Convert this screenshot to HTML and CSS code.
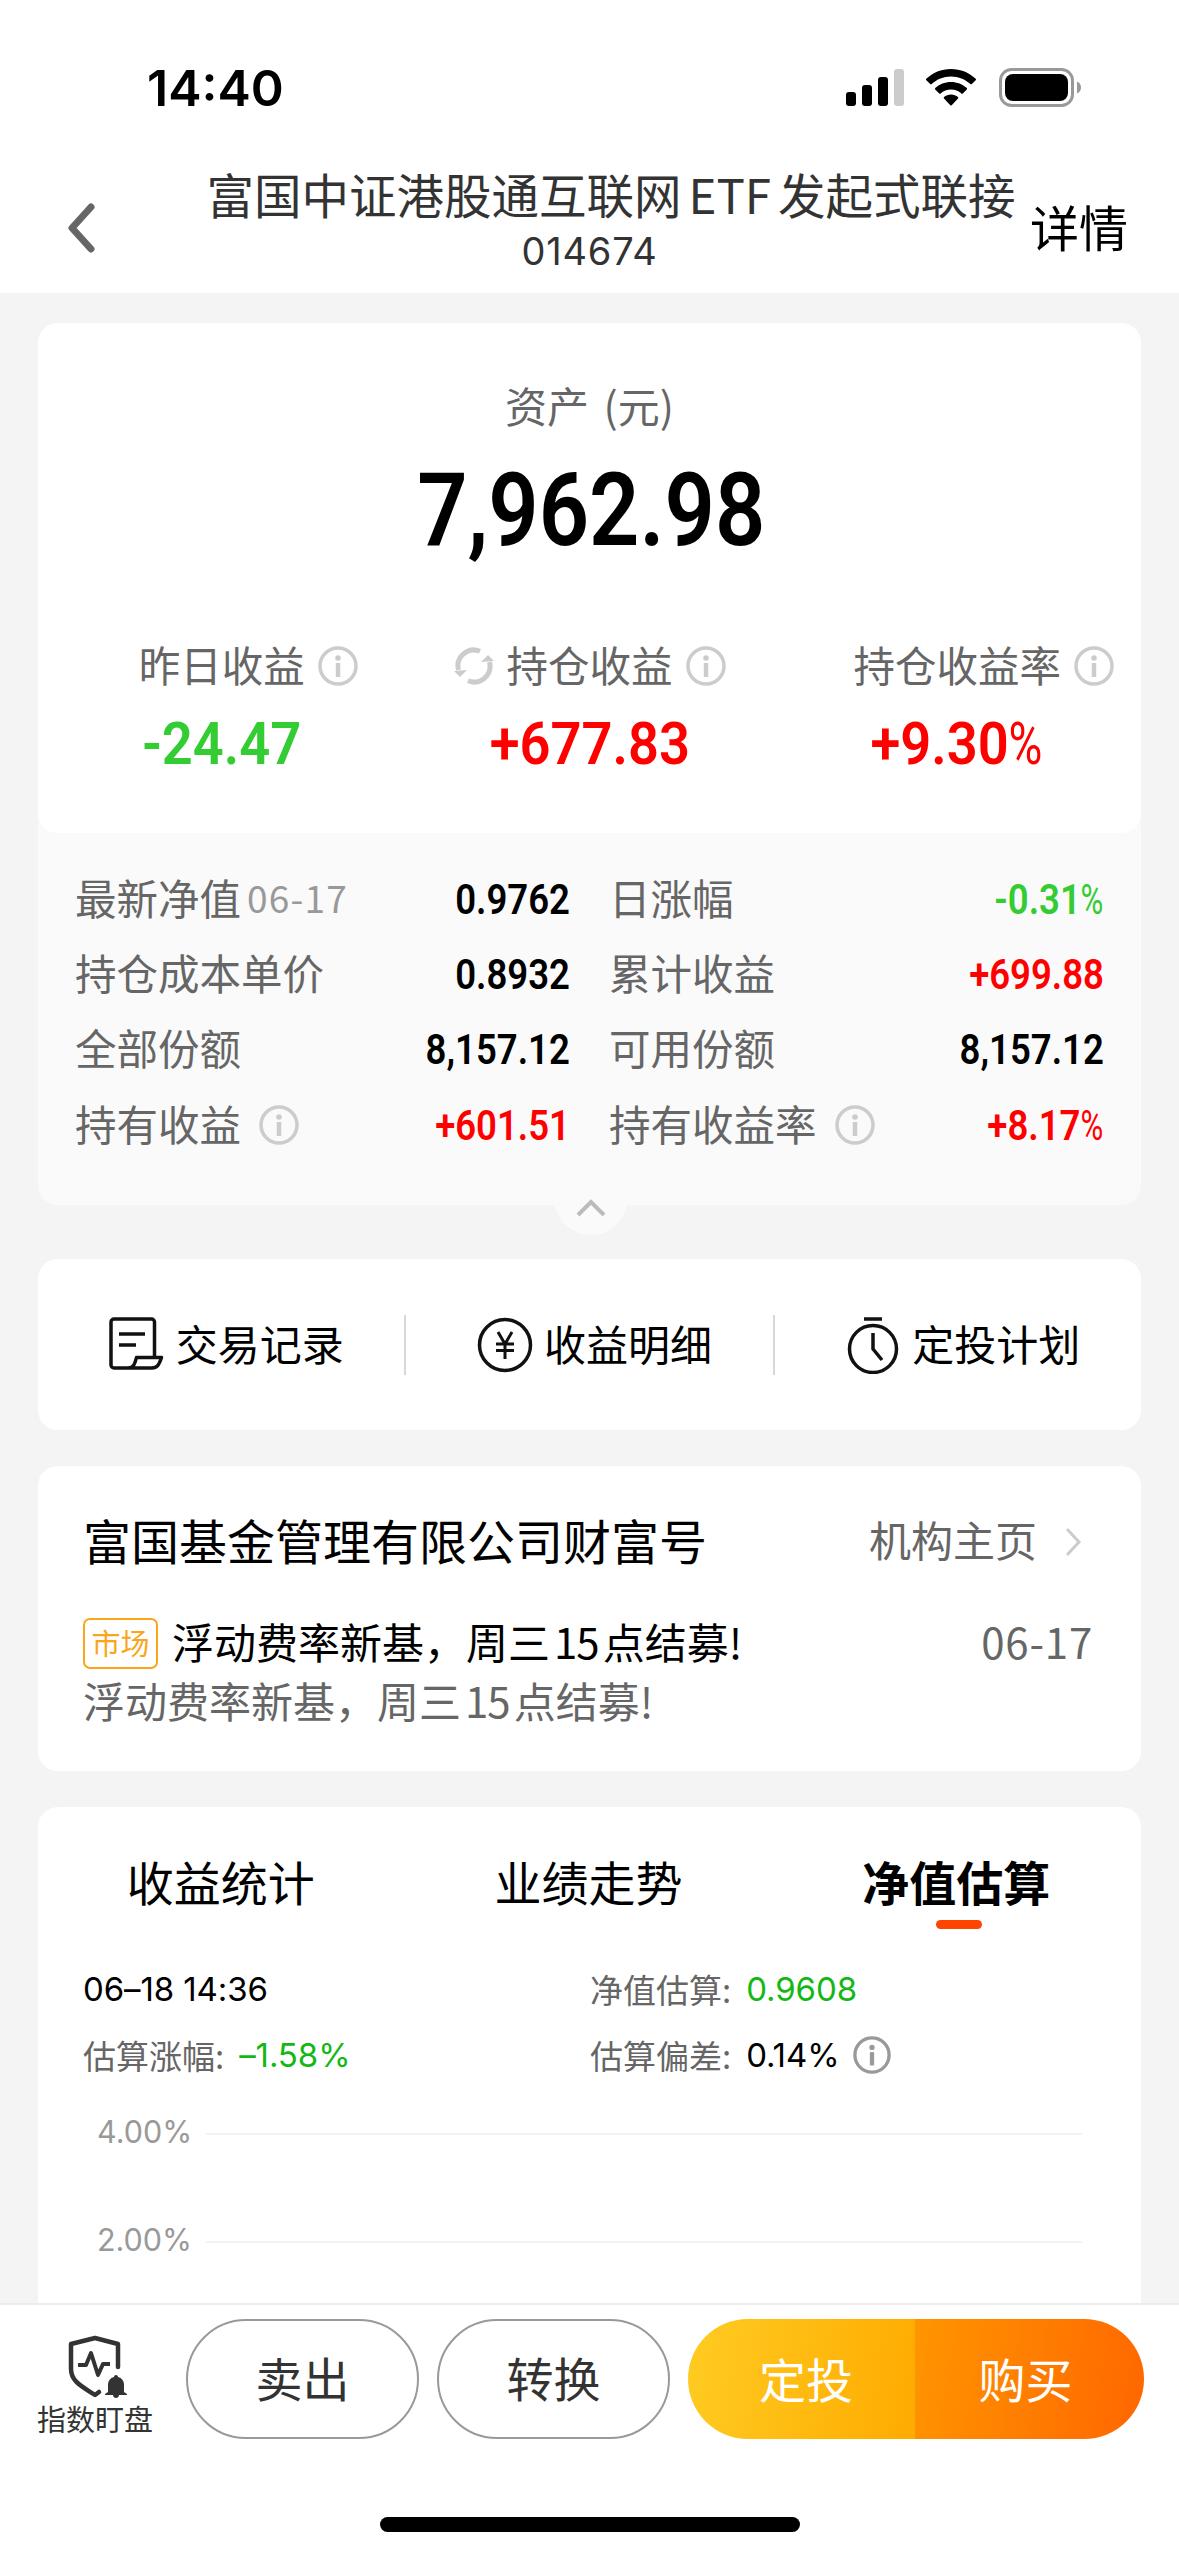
FILE: index.html
```html
<!DOCTYPE html>
<html lang="zh-CN">
<head>
    <meta charset="UTF-8">
    <meta name="viewport" content="width=device-width, initial-scale=1.0">
    <title>基金详情</title>
    <link rel="stylesheet" href="styles.css">
</head>
<body>
    <!-- shared icon -->
    <svg class="sprite">
        <symbol id="info" viewBox="0 0 40 40">
            <circle cx="20" cy="20" r="18" fill="none" stroke="currentColor" stroke-width="3.5"/>
            <circle cx="20" cy="12" r="2.8" fill="currentColor"/>
            <path d="M20 17v14" stroke="currentColor" stroke-width="4.5"/>
        </symbol>
    </svg>

    <div class="status-bar">
        <div class="time">14:40</div>
        <svg class="signal" viewBox="0 0 58 37">
            <rect x="0" y="23" width="10" height="14" rx="3"/>
            <rect x="16" y="16" width="10" height="21" rx="3"/>
            <rect x="32" y="8" width="10" height="29" rx="3"/>
            <rect x="48" y="0" width="10" height="37" rx="3" fill="#ccc"/>
        </svg>
        <svg class="wifi" viewBox="0 0 50 37">
            <path d="M25 0C15.400 0 6.600 3.700 0.300 9.800c-.4.4-.4 1 0 1.400l3.900 3.900c.4.4 1 .4 1.400 0C10.700 10.300 17.500 7.500 25 7.500s14.300 2.800 19.400 7.600c.4.400 1 .4 1.400 0l3.900-3.900c.4-.4.4-1 0-1.400C43.400 3.700 34.600 0 25 0z"/>
            <path d="M25 13c-6.100 0-11.600 2.300-15.800 6.100-.4.4-.4 1 0 1.400l4 4c.4.4 1 .4 1.400 0 2.800-2.500 6.400-4 10.400-4s7.600 1.500 10.400 4c.4.4 1 .4 1.400 0l4-4c.4-.4.4-1 0-1.400C36.600 15.300 31.100 13 25 13z"/>
            <path d="M25 25.500c-2.700 0-5.100 1-7 2.600-.4.4-.4 1 0 1.400l6.300 6.800c.4.4 1 .4 1.400 0l6.300-6.800c.4-.4.4-1 0-1.400-1.900-1.600-4.300-2.600-7-2.600z"/>
        </svg>
        <svg class="battery" viewBox="0 0 82 39">
            <rect x="1.500" y="1.500" width="72" height="36" rx="11" fill="none" stroke="#999" stroke-width="3"/>
            <rect x="6" y="6" width="63" height="27" rx="8"/>
            <path d="M78 13.500c2.500 1 4 3.300 4 6s-1.500 5-4 6z" fill="#999"/>
        </svg>
    </div>

    <div class="header">
        <svg class="back" viewBox="0 0 30 50"><path d="M25 4 6 25l19 21" fill="none" stroke="#666" stroke-width="7" stroke-linecap="round" stroke-linejoin="round"/></svg>
        <div class="header-title">
            <div class="fund-name">富国中证港股通互联网<span class="latin">ETF</span>发起式联接</div>
            <div class="fund-code">014674</div>
        </div>
        <div class="detail-link">详情</div>
    </div>

    <div class="content">
        <div class="card asset">
            <div class="asset-main">
                <div class="asset-label">资产 (元)</div>
                <div class="asset-total"><span class="din">7,962.98</span></div>
                <div class="profits">
                    <div class="profit">
                        <div class="profit-label"><i></i><span>昨日收益</span><svg class="info"><use href="#info"/></svg></div>
                        <div class="profit-value green"><span class="din">-24.47</span></div>
                    </div>
                    <div class="profit">
                        <div class="profit-label">
                            <svg class="refresh" viewBox="0 0 40 40">
                                <path d="M4.500 24A16 16 0 0 1 26 5.200M35.500 16A16 16 0 0 1 14 34.800" fill="none" stroke="#ccc" stroke-width="5"/>
                                <path d="m34 9 6 6-13 1zM6 31l-6-6 13-1z" fill="#ccc"/>
                            </svg>
                            <span>持仓收益</span><svg class="info"><use href="#info"/></svg>
                        </div>
                        <div class="profit-value red"><span class="din">+677.83</span></div>
                    </div>
                    <div class="profit">
                        <div class="profit-label"><i></i><span>持仓收益率</span><svg class="info"><use href="#info"/></svg></div>
                        <div class="profit-value red"><span class="din">+9.30<b>%</b></span></div>
                    </div>
                </div>
            </div>
            <div class="asset-more">
                <div class="row"><span>最新净值</span><span class="date">06-17</span><span class="num">0.9762</span></div>
                <div class="row"><span>日涨幅</span><span class="num green">-0.31<b>%</b></span></div>
                <div class="row"><span>持仓成本单价</span><span class="num">0.8932</span></div>
                <div class="row"><span>累计收益</span><span class="num red">+699.88</span></div>
                <div class="row"><span>全部份额</span><span class="num">8,157.12</span></div>
                <div class="row"><span>可用份额</span><span class="num">8,157.12</span></div>
                <div class="row"><span>持有收益</span><svg class="info"><use href="#info"/></svg><span class="num red">+601.51</span></div>
                <div class="row"><span>持有收益率</span><svg class="info"><use href="#info"/></svg><span class="num red">+8.17<b>%</b></span></div>
            </div>
            <div class="fold">
                <svg viewBox="0 0 30 18"><path d="M2 16 15 3l13 13" fill="none" stroke="#bbb" stroke-width="4"/></svg>
            </div>
        </div>

        <div class="card actions">
            <div class="action">
                <svg viewBox="0 0 58 58">
                    <path d="M46.500 41V6a3 3 0 0 0-3-3H6a3 3 0 0 0-3 3v43a3 3 0 0 0 3 3h38c5 0 7-3 9.500-10.500H28.500C27 47 26 52 20 52" fill="none" stroke="#111" stroke-width="3.500" stroke-linejoin="round"/>
                    <path d="M11 18h26M11 29h17" stroke="#111" stroke-width="3.500"/>
                </svg>
                <span>交易记录</span>
            </div>
            <div class="action">
                <svg viewBox="0 0 58 58">
                    <circle cx="29" cy="29" r="25.500" fill="none" stroke="#111" stroke-width="3.500"/>
                    <path d="m22 16 7 12 7-12M20 28h18M20 34.500h18M29 28v15" fill="none" stroke="#111" stroke-width="3"/>
                </svg>
                <span>收益明细</span>
            </div>
            <div class="action">
                <svg viewBox="0 0 58 58">
                    <circle cx="29" cy="33" r="23.500" fill="none" stroke="#111" stroke-width="3.500"/>
                    <path d="M20 3h18M29 17v16l9 11" fill="none" stroke="#111" stroke-width="3.500"/>
                </svg>
                <span>定投计划</span>
            </div>
        </div>

        <div class="card company">
            <div class="company-head">
                <span class="company-name">富国基金管理有限公司财富号</span>
                <span class="home-link">机构主页</span>
                <svg class="arrow" viewBox="0 0 18 30"><path d="m3 2 12 13L3 28" fill="none" stroke="#ccc" stroke-width="3"/></svg>
            </div>
            <div class="news">
                <span class="tag">市场</span>
                <span class="news-title">浮动费率新基，周三<span class="latin">15</span>点结募!</span>
                <span class="news-date">06-17</span>
            </div>
            <div class="news-text">浮动费率新基，周三<span class="latin">15</span>点结募!</div>
        </div>

        <div class="card estimate">
            <div class="tabs">
                <div class="tab">收益统计</div>
                <div class="tab">业绩走势</div>
                <div class="tab active">净值估算</div>
            </div>
            <div class="est-grid">
                <div class="est"><span class="sf">06–18 14:36</span></div>
                <div class="est"><label>净值估算:</label><span class="sf est-green">0.9608</span></div>
                <div class="est"><label>估算涨幅:</label><span class="sf est-green">–1.58%</span></div>
                <div class="est"><label>估算偏差:</label><span class="sf">0.14%</span><svg class="info"><use href="#info"/></svg></div>
            </div>
            <div class="chart">
                <div class="tick"><span>4.00%</span><hr></div>
                <div class="tick"><span>2.00%</span><hr></div>
            </div>
        </div>
    </div>

    <div class="footer">
        <div class="watch">
            <svg viewBox="0 0 60 64">
                <path d="M50 32V9L27 3 3 9v25c0 13 12 18 24 26l4-3" fill="none" stroke="#333" stroke-width="4.500" stroke-linejoin="round" stroke-linecap="round"/>
                <path d="M10 30h8l5-12 7 22 5-11h7" fill="none" stroke="#333" stroke-width="4" stroke-linejoin="round"/>
                <path d="M48 40c1.500 0 2 1 2 2 4 1 6 4 6 8v7l3 2v1H37v-1l3-2v-7c0-4 2-7 6-8 0-1 .5-2 2-2zM45 60h6c0 4-6 4-6 0z" fill="#333"/>
            </svg>
            <span>指数盯盘</span>
        </div>
        <button class="pill">卖出</button>
        <button class="pill">转换</button>
        <div class="buy-group">
            <button class="invest">定投</button>
            <button class="buy">购买</button>
        </div>
    </div>
    <div class="home-bar"><div></div></div>
</body>
</html>
```
FILE: styles.css
```css
* {
    box-sizing: border-box;
}

body {
    margin: 0;
    width: 1179px;
    height: 2556px;
    overflow: hidden;
    display: flex;
    flex-direction: column;
    background: #f4f4f4;
    color: #000;
    font-family: "Noto Sans CJK SC", sans-serif;
    font-size: 42px;
    line-height: 60px;
    white-space: nowrap;
}

svg {
    display: block;
    flex: none;
}

.sprite {
    display: none;
}

.green {
    color: #33cc33;
}

.red {
    color: #ff0000;
}

.info {
    width: 40px;
    height: 40px;
    color: #ccc;
}

.latin {
    margin: 0 4px;
    letter-spacing: -1px;
}

/* status bar */
.status-bar {
    height: 140px;
    background: #fff;
    display: flex;
    align-items: flex-start;
    padding: 68px 98px 0 147px;
}

.time {
    flex: 1;
    font-family: Inter, sans-serif;
    font-weight: 600;
    font-size: 50px;
    line-height: 40px;
}

.signal {
    width: 58px;
    height: 37px;
    margin: 1px 22px 0 0;
}

.wifi {
    width: 50px;
    height: 37px;
    margin: 1px 23px 0 0;
}

.battery {
    width: 82px;
    height: 39px;
}

/* header */
.header {
    height: 153px;
    background: #fff;
    display: flex;
    align-items: flex-start;
}

.back {
    width: 30px;
    height: 50px;
    margin: 63px 0 0 66px;
}

.header-title {
    flex: 1;
    padding: 24px 0 0 110px;
    text-align: center;
    color: #333;
}

.fund-name {
    font-size: 47.5px;
}

.fund-name .latin {
    margin: 0 7px;
    letter-spacing: 0;
}

.fund-code {
    margin-top: -3px;
    font-family: Inter, sans-serif;
    font-size: 38px;
    line-height: 60px;
    letter-spacing: .8px;
    padding-right: 43px;
}

.detail-link {
    padding: 56px 51px 0 14px;
    font-size: 49px;
}

/* cards */
.content {
    height: 2010px;
    overflow: hidden;
    padding: 30px 38px 0;
}

.card {
    background: #fff;
    border-radius: 20px;
    margin-bottom: 36px;
}

.asset {
    height: 882px;
    background: #fafafa;
    margin-bottom: 54px;
    position: relative;
}

.asset-main {
    height: 510px;
    background: #fff;
    border-radius: 20px;
    padding-top: 52px;
    text-align: center;
}

.asset-label {
    color: #666;
    word-spacing: 5px;
}

.asset-total {
    margin-top: 16px;
    padding-left: 3px;
    font-size: 102px;
    line-height: 100px;
}

.din {
    display: inline-block;
    font-family: Roboto, sans-serif;
    font-weight: 600;
    transform: scaleX(.92);
}

.asset-total .din {
    transform: scaleX(.865);
}

.din b,
.num b {
    display: inline-block;
    font-weight: 400;
    transform: scaleX(.85);
    transform-origin: left;
    margin-right: -.1em;
}

.profits {
    display: flex;
    margin-top: 74px;
}

.profit {
    flex: 1;
}

.profit-label {
    display: grid;
    grid-template-columns: 1fr auto 1fr;
    column-gap: 13px;
    align-items: center;
    color: #666;
    font-size: 41.5px;
}

.profit-label svg {
    margin-top: 3px;
}

.refresh {
    width: 40px;
    height: 40px;
    justify-self: end;
}

.profit-value {
    margin-top: 15px;
    font-size: 59px;
}

.asset-more {
    padding: 26px 37px 0 37px;
    display: grid;
    grid-template-columns: 495px 1fr;
    column-gap: 39px;
    grid-auto-rows: 75.3px;
}

.row {
    display: flex;
    align-items: center;
    color: #666;
    font-size: 41.5px;
}

.row .info {
    margin: 5px 0 0 18px;
}

.date {
    margin-left: 6px;
    font-size: 37px;
    letter-spacing: 1.2px;
    color: #999;
}

.num {
    margin-left: auto;
    padding-top: 6px;
    font-family: Roboto, sans-serif;
    font-size: 42px;
    font-weight: 600;
    color: #000;
    transform: scaleX(.87);
    transform-origin: right;
}

.num.green {
    color: #33cc33;
}

.num.red {
    color: #ff0000;
}

/* round handle hanging under the card */
.fold {
    position: absolute;
    left: 516px;
    bottom: -30px;
    width: 74px;
    height: 74px;
    border-radius: 50%;
    background: #fafafa;
    padding: 38px 22px 0;
}

.fold svg {
    width: 30px;
    height: 18px;
}

.actions {
    height: 171px;
    display: flex;
    align-items: center;
}

.action {
    flex: 1;
    height: 60px;
    display: flex;
    align-items: center;
    justify-content: center;
    gap: 10px;
    padding-left: 9px;
}

.action + .action {
    border-left: 2px solid #d8d8d8;
}

.action svg {
    width: 58px;
    height: 58px;
}

.action span {
    padding-bottom: 3px;
}

.company {
    height: 305px;
    padding: 43px 48px 0 45px;
}

.company-head {
    display: flex;
    align-items: center;
}

.company-name {
    flex: 1;
    font-size: 48px;
}

.home-link {
    color: #666;
}

.arrow {
    width: 18px;
    height: 30px;
    margin: 5px 11px 0 27px;
}

.news {
    display: flex;
    align-items: center;
    margin-top: 42px;
}

.tag {
    width: 75px;
    height: 51px;
    margin-top: 4px;
    border: 2px solid #faa61a;
    border-radius: 7px;
    color: #faa61a;
    font-size: 29px;
    line-height: 45px;
    text-align: center;
}

.news-title {
    flex: 1;
    margin-left: 14px;
}

.news-date {
    color: #666;
    letter-spacing: .8px;
}

.news-text {
    margin-top: -1px;
    color: #666;
}

.estimate {
    height: 600px;
    margin: 0;
}

.tabs {
    display: flex;
    padding-top: 44px;
}

.tab {
    flex: 1;
    text-align: center;
    font-size: 47px;
    padding-right: 2px;
}

.tab.active {
    font-weight: 700;
}

.tab.active::after {
    content: "";
    display: block;
    width: 46px;
    height: 9px;
    margin: 9px auto 0;
    border-radius: 5px;
    background: #ff4400;
    transform: translateX(3px);
}

.est-grid {
    display: grid;
    grid-template-columns: 507px 1fr;
    grid-auto-rows: 66px;
    padding: 27px 0 0 45px;
}

.est {
    display: flex;
    align-items: center;
    font-size: 33px;
}

.est label {
    color: #666;
    margin-right: 15px;
}

.sf {
    font-family: Inter, sans-serif;
    letter-spacing: -.1px;
}

.est-green {
    color: #14b814;
}

.est .info {
    width: 38px;
    height: 38px;
    margin-left: 14px;
    color: #999;
}

.chart {
    margin-top: -10px;
    padding: 0 59px 0 59px;
}

.tick {
    height: 108px;
    display: flex;
    align-items: center;
    font-family: Inter, sans-serif;
    font-size: 30.5px;
    color: #999;
}

.tick span {
    width: 109px;
}

.tick hr {
    flex: 1;
    height: 2px;
    border: 0;
    margin: 4px 0 0;
    background: #f2f2f2;
}

/* bottom bar */
.footer {
    height: 180px;
    background: #fff;
    border-top: 2px solid #ececec;
    display: flex;
    align-items: flex-start;
    padding: 14px 35px 0 37px;
    color: #333;
}

.watch {
    width: 149px;
    padding-top: 16px;
}

.watch svg {
    width: 60px;
    height: 64px;
    margin-left: 31px;
}

.watch span {
    display: block;
    font-size: 29px;
    line-height: 38px;
}

button {
    border: 0;
    padding: 0 0 3px;
    font-family: inherit;
    font-size: 47px;
    color: #fff;
}

.pill {
    width: 233px;
    height: 120px;
    margin-right: 18px;
    padding-bottom: 6px;
    border: 2px solid #999;
    border-radius: 60px;
    background: #fff;
    color: #333;
}

.buy-group {
    flex: 1;
    height: 120px;
    display: flex;
    border-radius: 60px;
    overflow: hidden;
}

.invest {
    width: 227px;
    padding-left: 9px;
    background: linear-gradient(100deg, #ffcc22, #ffaa00);
}

.buy {
    flex: 1;
    padding-right: 8px;
    background: linear-gradient(100deg, #ff9500, #ff6600);
}

.home-bar {
    flex: 1;
    background: #fff;
    padding-top: 34px;
}

.home-bar div {
    width: 420px;
    height: 15px;
    margin: 0 auto;
    border-radius: 8px;
    background: #000;
}
```
